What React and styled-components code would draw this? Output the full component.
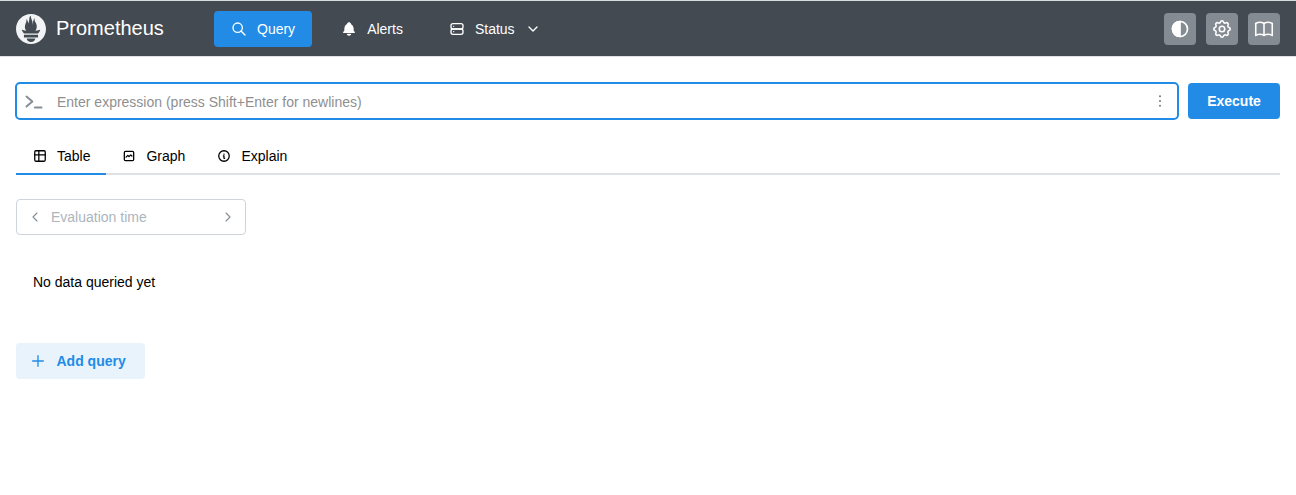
import React from "react";
import styled, { createGlobalStyle } from "styled-components";
import { SiPrometheus } from "react-icons/si";

const Global = createGlobalStyle`
  html, body { margin: 0; padding: 0; background: #fff; }
  body { font-family: "Liberation Sans", Arial, sans-serif; font-size: 14px; color: #000; }
  * { box-sizing: border-box; }
`;

const Icon = ({ size = 16, width = 2, children }) => (
  <svg width={size} height={size} viewBox="0 0 24 24" fill="none" stroke="currentColor" strokeWidth={width} strokeLinecap="round" strokeLinejoin="round">
    {children}
  </svg>
);

const Header = styled.header`
  height: 57px;
  background: #434a52;
  border-top: 1px solid #d9dcdf;
  border-bottom: 1px solid #dee2e6;
  padding: 0 16px;
  display: flex;
  align-items: center;
`;
const Brand = styled.div`
  width: 198px;
  display: flex;
  align-items: center;
  gap: 10px;
  color: #fff;
  font-size: 20px;
  svg { color: #f1f3f5; display: block; }
`;
const Nav = styled.nav`
  display: flex;
  align-items: center;
  gap: 12px;
`;
const NavLink = styled.a`
  height: 36px;
  padding: 0 17px;
  display: flex;
  align-items: center;
  gap: 10px;
  border-radius: 4px;
  color: #fff;
  font-size: 14px;
  background: ${(p) => (p.$active ? "#228be6" : "transparent")};
`;
const Chevron = styled.span`
  display: flex;
`;
const Spacer = styled.div` flex: 1; `;
const Actions = styled.div`
  display: flex;
  gap: 10px;
`;
const SquareButton = styled.button`
  width: 32px;
  height: 32px;
  padding: 0;
  border: 0;
  border-radius: 4px;
  background: #858b92;
  color: #fff;
  display: flex;
  align-items: center;
  justify-content: center;
`;

const Main = styled.main`
  padding: 25px 16px 0;
`;
const QueryRow = styled.div`
  display: flex;
  align-items: center;
  gap: 9px;
`;
const ExpressionBox = styled.div`
  flex: 1;
  height: 38px;
  margin-left: -1px;
  border: 2px solid #228be6;
  border-radius: 5px;
  display: flex;
  align-items: center;
  padding: 2px 9px 0 7px;
  color: #868e96;
`;
const DotsBox = styled.span`
  display: flex;
  color: #757575;
  margin-top: -2px;
`;
const Placeholder = styled.span`
  flex: 1;
  margin-left: 13px;
  font-size: 14px;
  color: #8f8f8f;
`;
const Execute = styled.button`
  width: 92px;
  height: 36px;
  border: 0;
  border-radius: 4px;
  background: #228be6;
  color: #fff;
  font: 700 14px "Liberation Sans", Arial, sans-serif;
`;
const Tabs = styled.div`
  margin-top: 18px;
  display: flex;
  height: 37px;
  border-bottom: 2px solid #dee2e6;
`;
const Tab = styled.div`
  height: 37px;
  padding: 0 16px;
  display: flex;
  align-items: center;
  gap: 10px;
  font-size: 14px;
  border-bottom: 2px solid ${(p) => (p.$active ? "#228be6" : "transparent")};
  &:first-child { padding-left: 17px; }
`;
const TimePicker = styled.div`
  margin-top: 24px;
  width: 230px;
  height: 36px;
  border: 1px solid #ced4da;
  border-radius: 4px;
  display: flex;
  align-items: center;
  padding: 0 9px 0 10px;
  color: #868e96;
`;
const TimeText = styled.span`
  flex: 1;
  margin-left: 8px;
  color: #adb5bd;
  font-size: 14px;
`;
const Empty = styled.p`
  margin: 39px 0 0 17px;
  font-size: 14px;
  line-height: 16px;
`;
const AddQuery = styled.button`
  margin-top: 53px;
  width: 129px;
  height: 36px;
  border: 0;
  border-radius: 4px;
  background: #e8f3fc;
  color: #228be6;
  font: 700 14px "Liberation Sans", Arial, sans-serif;
  display: flex;
  align-items: center;
  gap: 10.5px;
  padding: 0 0 0 14px;
`;

export default function App() {
  return (
    <>
      <Global />
      <Header>
        <Brand><SiPrometheus size={30} /><span>Prometheus</span></Brand>
        <Nav>
          <NavLink $active>
            <Icon size={16} width={2}><path d="M10 10m-7 0a7 7 0 1 0 14 0a7 7 0 1 0 -14 0" /><path d="M21 21l-6 -6" /></Icon>
            Query
          </NavLink>
          <NavLink>
            <svg width="16" height="16" viewBox="0 0 24 24" fill="currentColor">
              <path d="M14.235 19c.865 0 1.322 1.024 .745 1.668a3.992 3.992 0 0 1 -2.98 1.332a3.992 3.992 0 0 1 -2.98 -1.332c-.552 -.616 -.158 -1.579 .634 -1.661l.11 -.006h4.471z" />
              <path d="M12 2c1.358 0 2.506 .903 2.875 2.141l.046 .171l.008 .043a8.013 8.013 0 0 1 4.024 6.069l.028 .287l.019 .289v2.931l.021 .136a3 3 0 0 0 1.143 1.847l.167 .117l.162 .099c.86 .487 .56 1.766 -.377 1.864l-.116 .006h-16c-1.028 0 -1.387 -1.364 -.493 -1.87a3 3 0 0 0 1.472 -2.063l.021 -.143l.001 -2.97a8 8 0 0 1 3.821 -6.454l.248 -.146l.01 -.043a3.003 3.003 0 0 1 2.562 -2.29l.182 -.017l.176 -.004z" />
            </svg>
            Alerts
          </NavLink>
          <NavLink>
            <Icon size={16} width={2}>
              <path d="M3 4m0 3a3 3 0 0 1 3 -3h12a3 3 0 0 1 3 3v2a3 3 0 0 1 -3 3h-12a3 3 0 0 1 -3 -3z" />
              <path d="M3 12m0 3a3 3 0 0 1 3 -3h12a3 3 0 0 1 3 3v2a3 3 0 0 1 -3 3h-12a3 3 0 0 1 -3 -3z" />
              <path d="M7 8v.01" /><path d="M7 16v.01" />
            </Icon>
            Status
            <Chevron>
              <Icon size={16} width={2}><path d="M6 9l6 6l6 -6" /></Icon>
            </Chevron>
          </NavLink>
        </Nav>
        <Spacer />
        <Actions>
          <SquareButton aria-label="theme">
            <svg width="20" height="20" viewBox="0 0 24 24" fill="none" stroke="currentColor" strokeWidth="2">
              <circle cx="12" cy="12" r="9" />
              <path d="M12 3a9 9 0 0 0 0 18z" fill="currentColor" />
            </svg>
          </SquareButton>
          <SquareButton aria-label="settings">
            <Icon size={22} width={1.7}>
              <path d="M10.325 4.317c.426 -1.756 2.924 -1.756 3.35 0a1.724 1.724 0 0 0 2.573 1.066c1.543 -.94 3.31 .826 2.37 2.37a1.724 1.724 0 0 0 1.065 2.572c1.756 .426 1.756 2.924 0 3.35a1.724 1.724 0 0 0 -1.066 2.573c.94 1.543 -.826 3.31 -2.37 2.37a1.724 1.724 0 0 0 -2.572 1.065c-.426 1.756 -2.924 1.756 -3.35 0a1.724 1.724 0 0 0 -2.573 -1.066c-1.543 .94 -3.31 -.826 -2.37 -2.37a1.724 1.724 0 0 0 -1.065 -2.572c-1.756 -.426 -1.756 -2.924 0 -3.35a1.724 1.724 0 0 0 1.066 -2.573c-.94 -1.543 .826 -3.31 2.37 -2.37c1 .608 2.296 .07 2.572 -1.065z" />
              <path d="M9 12a3 3 0 1 0 6 0a3 3 0 0 0 -6 0" />
            </Icon>
          </SquareButton>
          <SquareButton aria-label="docs">
            <Icon size={22} width={1.7}>
              <path d="M3 19a9 9 0 0 1 9 0a9 9 0 0 1 9 0" />
              <path d="M3 6a9 9 0 0 1 9 0a9 9 0 0 1 9 0" />
              <path d="M3 6v13" /><path d="M12 6v13" /><path d="M21 6v13" />
            </Icon>
          </SquareButton>
        </Actions>
      </Header>
      <Main>
        <QueryRow>
          <ExpressionBox>
            <Icon size={20} width={2.4}><path d="M3 5.5l7 6l-7 6" /><path d="M13 18.5h8" /></Icon>
            <Placeholder>Enter expression (press Shift+Enter for newlines)</Placeholder>
            <DotsBox>
              <Icon size={16} width={3}><path d="M12 5v.01" /><path d="M12 12v.01" /><path d="M12 19v.01" /></Icon>
            </DotsBox>
          </ExpressionBox>
          <Execute>Execute</Execute>
        </QueryRow>
        <Tabs>
          <Tab $active>
            <Icon size={14} width={2.2}>
              <path d="M3 5a2 2 0 0 1 2 -2h14a2 2 0 0 1 2 2v14a2 2 0 0 1 -2 2h-14a2 2 0 0 1 -2 -2v-14z" />
              <path d="M3 10h18" /><path d="M10 3v18" />
            </Icon>
            Table
          </Tab>
          <Tab>
            <Icon size={14} width={2.2}>
              <path d="M4 18v-12a2 2 0 0 1 2 -2h12a2 2 0 0 1 2 2v12a2 2 0 0 1 -2 2h-12a2 2 0 0 1 -2 -2z" />
              <path d="M7 14l3 -3l2 2l3 -3l2 2" />
            </Icon>
            Graph
          </Tab>
          <Tab>
            <Icon size={14} width={2.2}>
              <path d="M3 12a9 9 0 1 0 18 0a9 9 0 0 0 -18 0" />
              <path d="M12 9h.01" /><path d="M11 12h1v4h1" />
            </Icon>
            Explain
          </Tab>
        </Tabs>
        <TimePicker>
          <Icon size={16} width={1.7}><path d="M15 6l-6 6l6 6" /></Icon>
          <TimeText>Evaluation time</TimeText>
          <Icon size={16} width={1.7}><path d="M9 6l6 6l-6 6" /></Icon>
        </TimePicker>
        <Empty>No data queried yet</Empty>
        <AddQuery>
          <Icon size={16} width={2}><path d="M12 4v16" /><path d="M4 12h16" /></Icon>
          Add query
        </AddQuery>
      </Main>
    </>
  );
}
